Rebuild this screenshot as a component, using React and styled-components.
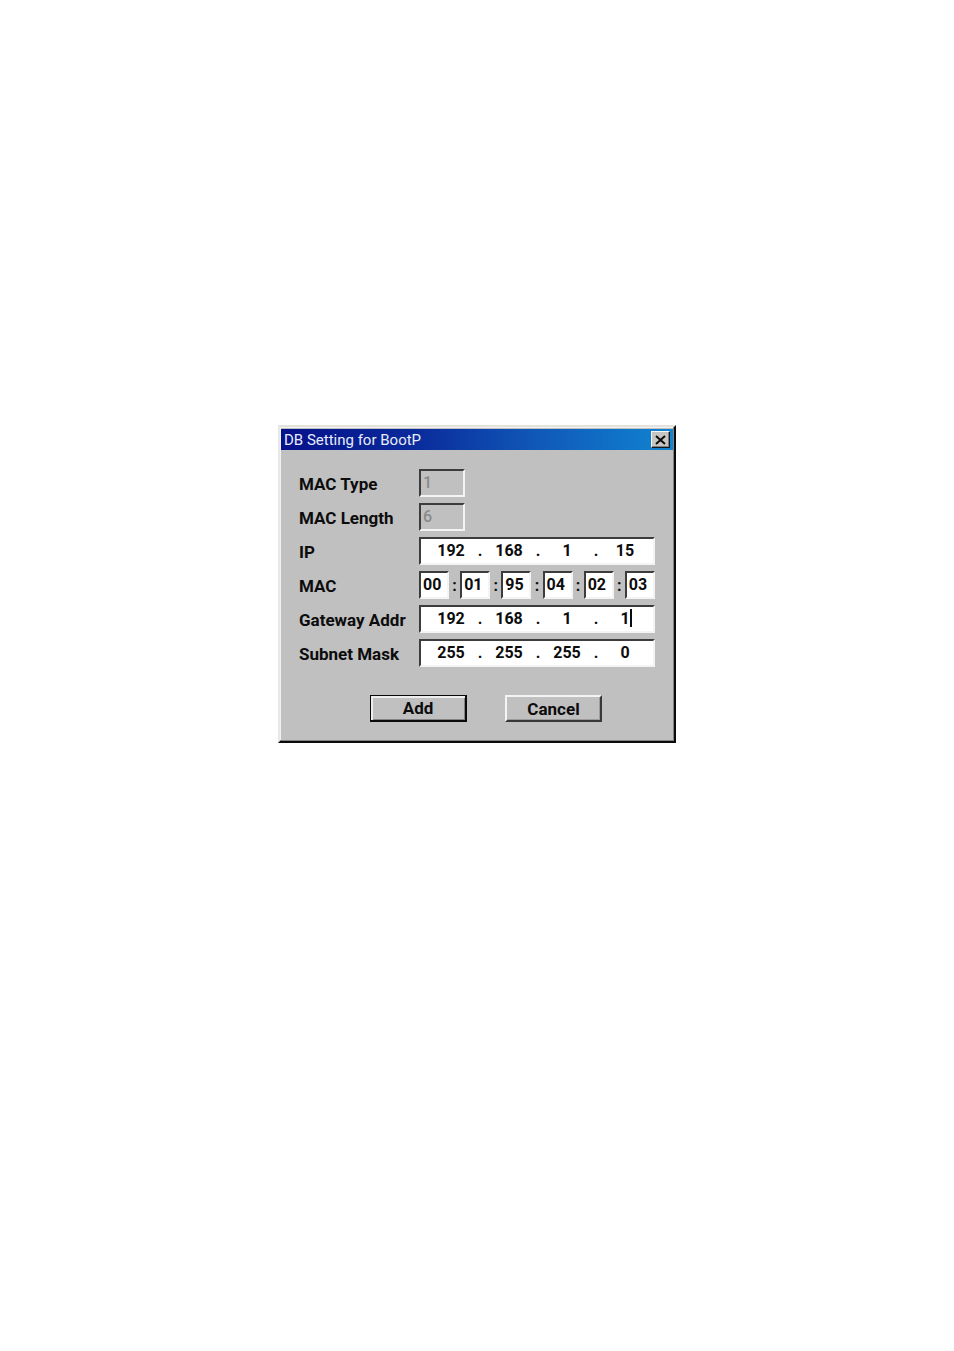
import React, { useState } from 'react';
import styled, { createGlobalStyle } from 'styled-components';

const GlobalStyle = createGlobalStyle`
  * {
    box-sizing: border-box;
  }

  body {
    margin: 0;
    background: #ffffff;
  }
`;

const Page = styled.main`
  display: flex;
  justify-content: center;
  align-items: flex-start;
  min-height: 100vh;
  padding: 425px 16px 40px;
  font-family: Roboto, "Liberation Sans", sans-serif;
  color: #0c0c0c;
`;

const Dialog = styled.section`
  width: 100%;
  max-width: 398px;
  padding: 2px 1px 1px;
  background: #c0c0c0;
  border: 2px solid;
  border-color: #e4e2de #0a0a0a #0a0a0a #e8e8e8;
  box-shadow: inset -1px -1px 0 #828282, inset 1px 1px 0 #f2f2f2;
`;

const TitleBar = styled.header`
  display: flex;
  align-items: center;
  justify-content: space-between;
  height: 21px;
  padding: 0 3px;
  background: linear-gradient(to right, #06108a, #0a2c9c 35%, #1058b8 65%, #1084d0);
`;

const Title = styled.h1`
  margin: 0;
  color: #e8ecfa;
  font-size: 15px;
  font-weight: 400;
  line-height: 20px;
`;

const CloseButton = styled.button`
  display: flex;
  align-items: center;
  justify-content: center;
  width: 19px;
  height: 17px;
  padding: 0;
  background: #c8c6c2;
  border: 1px solid;
  border-color: #f8f8f8 #101820 #101820 #f8f8f8;
  box-shadow: inset -1px -1px 0 #808080;
`;

const Form = styled.form`
  display: flex;
  flex-direction: column;
  gap: 6px;
  padding: 19px 18px 18px;
`;

const Row = styled.div`
  display: grid;
  grid-template-columns: 120px 1fr;
  align-items: center;
`;

const Label = styled.label`
  padding-top: 2px;
  font-size: 17px;
  font-weight: 700;
  line-height: 26px;
`;

const sunken = `
  height: 28px;
  border: 2px solid;
  border-color: #3c3c3c #f4f4f4 #f4f4f4 #3c3c3c;
`;

const TextBox = styled.input`
  ${sunken}
  width: ${props => props.$width};
  padding: 0 0 2px 2px;
  background: ${props => (props.disabled ? '#c0c0c0' : '#ffffff')};
  color: ${props => (props.disabled ? '#8a8a8a' : '#0c0c0c')};
  font-family: inherit;
  font-size: 16px;
  font-weight: ${props => (props.disabled ? 500 : 700)};
`;

const AddressBox = styled.div`
  ${sunken}
  display: flex;
  align-items: center;
  padding: 0 4px 2px 6px;
  background: #ffffff;
  font-size: 16px;
  font-weight: 700;
`;

const OctetCell = styled.span`
  position: relative;
  flex: 1;
  min-width: 0;
`;

const Octet = styled.input`
  display: block;
  width: 100%;
  padding: 0;
  border: 0;
  outline: 0;
  background: transparent;
  color: inherit;
  font: inherit;
  text-align: center;
`;

const Caret = styled.span`
  position: absolute;
  top: 0;
  left: calc(50% + 5px);
  width: 2px;
  height: 18px;
  background: #0c0c0c;
`;

const Dot = styled.span`
  width: 10px;
  text-align: center;
`;

const MacGroup = styled.div`
  display: flex;
  align-items: center;
  justify-content: space-between;
  font-size: 16px;
  font-weight: 700;
`;

const Buttons = styled.div`
  display: flex;
  justify-content: center;
  gap: 38px;
  padding: 22px 0 0 18px;
`;

const Button = styled.button`
  width: 97px;
  height: 27px;
  padding: 0;
  background: #c0c0c0;
  color: inherit;
  font-family: inherit;
  font-size: 17px;
  font-weight: 700;
  border-style: solid;
  border-width: ${props => (props.$primary ? '1px 2px 2px 1px' : '2px')};
  border-color: ${props => (props.$primary ? '#0a0a0a' : '#f4f4f4 #383838 #383838 #f4f4f4')};
  box-shadow: ${props => (props.$primary
    ? 'inset 2px 2px 0 #eeeeee, inset -1px -1px 0 #848484'
    : 'inset -1px -1px 0 #9c9c9c')};
`;

function AddressField({ id, label, initial, caretAt }) {
  const [octets, setOctets] = useState(initial);

  const change = (index, value) => {
    setOctets(octets.map((octet, i) => (i === index ? value : octet)));
  };

  return (
    <Row>
      <Label htmlFor={`${id}-0`}>{label}</Label>
      <AddressBox>
        {octets.map((octet, i) => (
          <React.Fragment key={i}>
            {i > 0 && <Dot>.</Dot>}
            <OctetCell>
              <Octet
                id={`${id}-${i}`}
                aria-label={i > 0 ? `${label} ${i + 1}` : undefined}
                maxLength={3}
                value={octet}
                onChange={e => change(i, e.target.value)}
              />
              {caretAt === i && <Caret />}
            </OctetCell>
          </React.Fragment>
        ))}
      </AddressBox>
    </Row>
  );
}

function MacField() {
  const [bytes, setBytes] = useState(['00', '01', '95', '04', '02', '03']);

  const change = (index, value) => {
    setBytes(bytes.map((byte, i) => (i === index ? value : byte)));
  };

  return (
    <Row>
      <Label htmlFor="mac-0">MAC</Label>
      <MacGroup>
        {bytes.map((byte, i) => (
          <React.Fragment key={i}>
            {i > 0 && <span>:</span>}
            <TextBox
              id={`mac-${i}`}
              aria-label={i > 0 ? `MAC ${i + 1}` : undefined}
              $width="30px"
              maxLength={2}
              value={byte}
              onChange={e => change(i, e.target.value)}
            />
          </React.Fragment>
        ))}
      </MacGroup>
    </Row>
  );
}

function App() {
  return (
    <Page>
      <GlobalStyle />
      <Dialog role="dialog" aria-labelledby="dialog-title">
        <TitleBar>
          <Title id="dialog-title">DB Setting for BootP</Title>
          <CloseButton type="button" aria-label="Close">
            <svg width="11" height="10" viewBox="0 0 11 10" fill="none" stroke="#0c0c0c" strokeWidth="2">
              <path d="M1 1 L10 9 M10 1 L1 9" />
            </svg>
          </CloseButton>
        </TitleBar>
        <Form onSubmit={e => e.preventDefault()}>
          <Row>
            <Label htmlFor="mac-type">MAC Type</Label>
            <TextBox id="mac-type" $width="46px" defaultValue="1" disabled />
          </Row>
          <Row>
            <Label htmlFor="mac-length">MAC Length</Label>
            <TextBox id="mac-length" $width="46px" defaultValue="6" disabled />
          </Row>
          <AddressField id="ip" label="IP" initial={['192', '168', '1', '15']} />
          <MacField />
          <AddressField id="gateway" label="Gateway Addr" initial={['192', '168', '1', '1']} caretAt={3} />
          <AddressField id="subnet" label="Subnet Mask" initial={['255', '255', '255', '0']} />
          <Buttons>
            <Button type="submit" $primary>Add</Button>
            <Button type="button">Cancel</Button>
          </Buttons>
        </Form>
      </Dialog>
    </Page>
  );
}

export default App;
